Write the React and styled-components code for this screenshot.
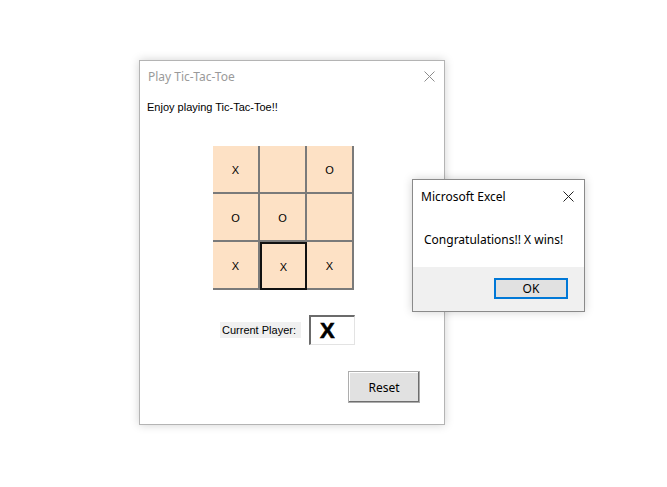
import React from "react";
import styled, { createGlobalStyle } from "styled-components";

const GlobalStyle = createGlobalStyle`
  html, body {
    margin: 0;
    padding: 0;
    background: #ffffff;
  }
  body {
    width: 667px;
    height: 487px;
    overflow: hidden;
    font-family: "Noto Sans", "Liberation Sans", sans-serif;
  }
`;

const Desktop = styled.div`
  position: relative;
  width: 667px;
  height: 487px;
  background: #ffffff;
`;

const Window = styled.div`
  position: absolute;
  left: ${(p) => p.x}px;
  top: ${(p) => p.y}px;
  width: ${(p) => p.w}px;
  height: ${(p) => p.h}px;
  box-sizing: border-box;
  border: 1px solid ${(p) => p.edge};
  background: #ffffff;
  box-shadow: 0 0 9px rgba(0, 0, 0, 0.18);
  display: flex;
  flex-direction: column;
`;

const TitleBar = styled.div`
  height: ${(p) => p.h}px;
  flex-shrink: 0;
  display: flex;
  align-items: center;
  justify-content: space-between;
  padding: 0 ${(p) => p.pr}px 0 ${(p) => p.pl}px;
  font-family: "Noto Sans", sans-serif;
  font-size: 12px;
  color: ${(p) => p.color};
`;

const CloseIcon = ({ color }) => (
  <svg width="11" height="11" viewBox="0 0 11 11">
    <path d="M0.5 0.5 L10.5 10.5 M10.5 0.5 L0.5 10.5" stroke={color} strokeWidth="1" fill="none" />
  </svg>
);

const FormBody = styled.div`
  flex: 1;
  display: flex;
  flex-direction: column;
  padding: 9px 24px 21px 7px;
  font-family: "Liberation Sans", Tahoma, sans-serif;
  font-size: 11px;
  color: #000;
`;

const Caption = styled.div`
  height: 14px;
  line-height: 14px;
`;

const Board = styled.div`
  display: grid;
  grid-template-columns: repeat(3, 47px);
  grid-auto-rows: 48px;
  margin: 32px 0 0 66px;
  width: max-content;
`;

const Cell = styled.div`
  box-sizing: border-box;
  background: #fde1c5;
  display: flex;
  align-items: center;
  justify-content: center;
  font-size: 11px;
  border-right: 2px solid #7a7a7a;
  border-bottom: 2px solid #7a7a7a;
  border-left: ${(p) => (p.focus ? "2px solid #111" : "none")};
  border-top: ${(p) => (p.focus ? "2px solid #111" : "none")};
  ${(p) => p.focus && "border-right-color: #111; border-bottom-color: #111;"}
  padding-top: 1px;
`;

const PlayerRow = styled.div`
  display: flex;
  align-items: center;
  gap: 8px;
  margin: 25px 0 0 73px;
`;

const PlayerLabel = styled.div`
  width: 81px;
  height: 16px;
  background: #f0f0f0;
  line-height: 16px;
  padding-left: 2px;
  box-sizing: border-box;
`;

const PlayerBox = styled.div`
  width: 46px;
  height: 30px;
  box-sizing: border-box;
  background: #fff;
  border-top: 2px solid #6b6b6b;
  border-left: 2px solid #6b6b6b;
  border-right: 1px solid #e3e3e3;
  border-bottom: 1px solid #e3e3e3;
  display: flex;
  align-items: center;
  padding-left: 9px;
  font-family: "Liberation Sans", Arial, sans-serif;
  font-weight: 900;
  font-size: 22px;
  line-height: 1;
  -webkit-text-stroke: 0.6px #000;
`;

const Footer = styled.div`
  margin-top: auto;
  display: flex;
  justify-content: flex-end;
`;

const WinButton = styled.button`
  width: ${(p) => p.w}px;
  height: ${(p) => p.h}px;
  box-sizing: border-box;
  background: #e1e1e1;
  font-family: "Noto Sans", sans-serif;
  font-size: 12px;
  color: #000;
  padding: 0;
  border: ${(p) => (p.primary ? "1px solid #0078d7" : "1px solid #adadad")};
  box-shadow: ${(p) =>
    p.primary ? "inset 0 0 0 1px #0078d7" : "inset -1px -1px 0 #6e6e6e, inset 1px 1px 0 #fff"};
`;

const MsgBody = styled.div`
  flex: 1;
  display: flex;
  align-items: center;
  padding: 0 0 0 11px;
  font-family: "Noto Sans", sans-serif;
  font-size: 12px;
  color: #000;
`;

const MsgFooter = styled.div`
  height: 42px;
  background: #f0f0f0;
  display: flex;
  align-items: center;
  justify-content: flex-end;
  padding: 0 16px 2px 0;
`;

const board = [
  ["X", "", "O"],
  ["O", "O", ""],
  ["X", "X", "X"],
];

export default function App() {
  return (
    <>
      <GlobalStyle />
      <Desktop>
        <Window x={139} y={60} w={306} h={365} edge="#b4b4b4">
          <TitleBar h={30} pl={8} pr={9} color="#9a9a9a">
            <span>Play Tic-Tac-Toe</span>
            <CloseIcon color="#8c8c8c" />
          </TitleBar>
          <FormBody>
            <Caption>Enjoy playing Tic-Tac-Toe!!</Caption>
            <Board>
              {board.map((row, r) =>
                row.map((v, c) => (
                  <Cell key={`${r}-${c}`} focus={r === 2 && c === 1}>
                    {v}
                  </Cell>
                ))
              )}
            </Board>
            <PlayerRow>
              <PlayerLabel>Current Player:</PlayerLabel>
              <PlayerBox>X</PlayerBox>
            </PlayerRow>
            <Footer>
              <WinButton w={72} h={32}>Reset</WinButton>
            </Footer>
          </FormBody>
        </Window>

        <Window x={412} y={179} w={173} h={133} edge="#8a8a8a">
          <TitleBar h={32} pl={8} pr={10} color="#000">
            <span>Microsoft Excel</span>
            <CloseIcon color="#222" />
          </TitleBar>
          <MsgBody>Congratulations!! X wins!</MsgBody>
          <MsgFooter>
            <WinButton primary w={74} h={21}>OK</WinButton>
          </MsgFooter>
        </Window>
      </Desktop>
    </>
  );
}
